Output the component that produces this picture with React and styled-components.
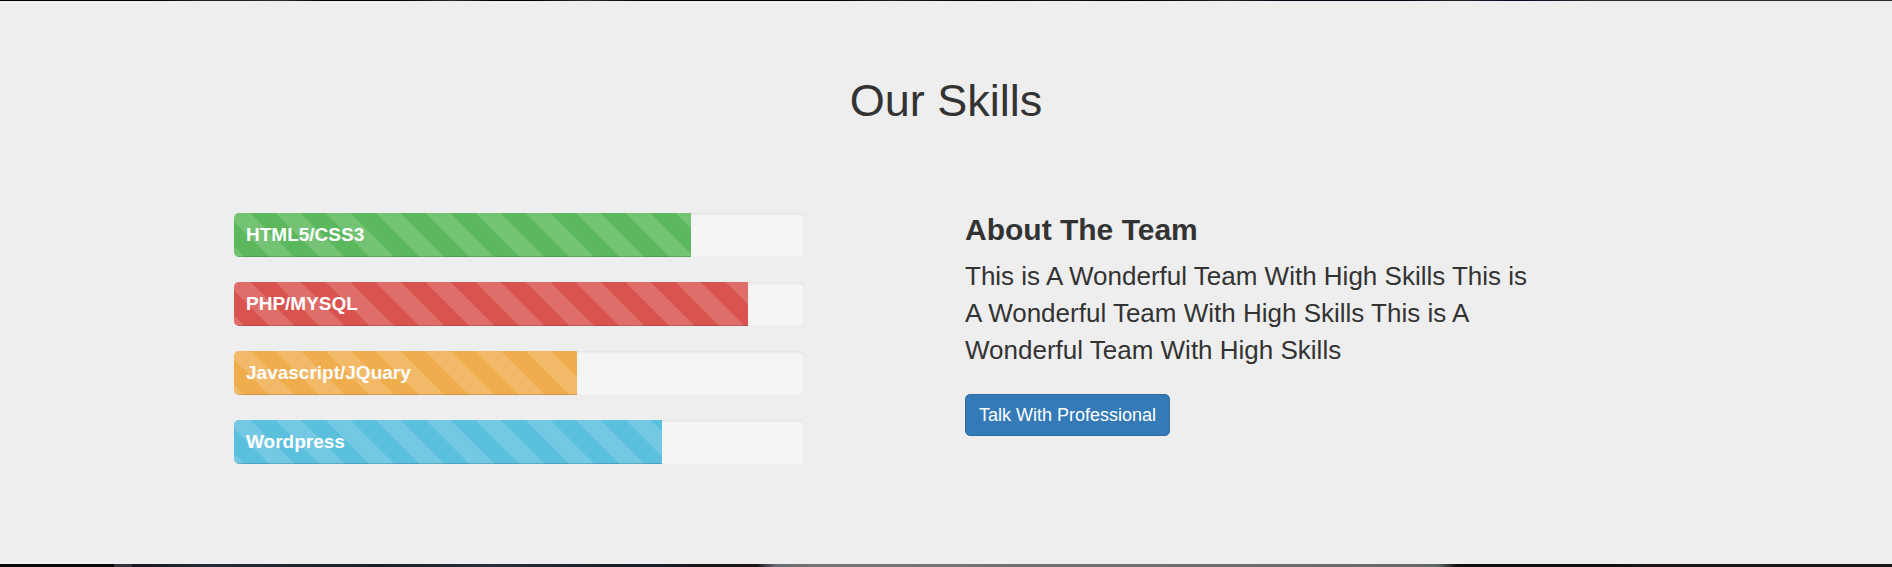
import React from "react";
import styled, { createGlobalStyle } from "styled-components";

const GlobalStyle = createGlobalStyle`
  *, *::before, *::after { box-sizing: border-box; }
  body {
    margin: 0;
    background: #eee;
    color: #333;
    font-family: "Liberation Sans", Arial, sans-serif;
  }
`;

const Page = styled.div`
  display: flex;
  flex-direction: column;
  min-height: 100vh;
`;

const TopEdge = styled.div`
  height: 1px;
  background: linear-gradient(90deg, #000 0%, #000 8%, #26222b 11%, #26222b 13%, #2b2830 15%, #000 17%, #000 21%, #2d2932 24%, #000 26%, #000 28%, #2d2932 31%, #000 34%, #000 44%, #201c1c 47%, #000 52%, #161014 56%, #000 60%, #23202c 65%, #030012 68%, #030012 74%, #252230 77%, #0a0520 80%, #2a2632 84%, #2a2632 100%);
`;

const BottomEdge = styled.div`
  height: 4px;
  background: linear-gradient(90deg, #08070a 0%, #08070a 6%, #303338 6%, #303338 7%, #14171b 7%, #252b38 11%, #1a1f28 20%, #2a2e3c 26%, #18202a 32%, #15202a 35%, #18141a 37%, #1c161c 40%, #666c72 41%, #727472 43%, #757270 50%, #6f6e6c 65%, #666965 75%, #5c6664 76%, #101014 77%, #0e0d10 85%, #1c1716 87%, #1a1718 100%);
`;

const Section = styled.section`
  flex: 1;
  padding: 72px 0 100px;
`;

const Container = styled.div`
  max-width: 1462px;
  margin: 0 auto;
`;

const Heading = styled.h1`
  margin: 0 0 84px;
  font-size: 45px;
  font-weight: 400;
  line-height: 56px;
  text-align: center;
`;

const Row = styled.div`
  display: grid;
  grid-template-columns: repeat(12, minmax(0, 1fr));
`;

const Column = styled.div`
  grid-column: ${(p) => p.$start} / span 5;
  padding: 0 19px;

  @media (max-width: 900px) {
    grid-column: 1 / -1;
    padding-bottom: 32px;
  }
`;

const SkillList = styled.div`
  display: flex;
  flex-direction: column;
  gap: 25px;
`;

const Track = styled.div`
  height: 44px;
  overflow: hidden;
  border-radius: 5px;
  background: #f5f5f5;
  box-shadow: inset 0 1px 3px rgba(0, 0, 0, 0.1);
`;

const Fill = styled.div`
  width: ${(p) => p.$value}%;
  height: 100%;
  padding-left: 12px;
  color: #fff;
  font-size: 19px;
  font-weight: 700;
  line-height: 44px;
  white-space: nowrap;
  background-color: ${(p) => p.$color};
  background-image: linear-gradient(
    45deg,
    rgba(255, 255, 255, 0.15) 25%,
    transparent 25%,
    transparent 50%,
    rgba(255, 255, 255, 0.15) 50%,
    rgba(255, 255, 255, 0.15) 75%,
    transparent 75%,
    transparent
  );
  background-size: 50px 50px;
  background-position: 42px 0;
  box-shadow: inset 0 -1px 0 rgba(0, 0, 0, 0.15);
`;

const TeamTitle = styled.h3`
  margin: 0 0 12px;
  font-size: 30px;
  line-height: 33px;
`;

const Lead = styled.p`
  margin: 0 0 25px;
  font-size: 26px;
  line-height: 37px;
`;

const Button = styled.button`
  height: 42px;
  padding: 0 13px;
  border: 1px solid #2e6da4;
  border-radius: 5px;
  background: #337ab7;
  color: #fff;
  font-family: inherit;
  font-size: 18px;
  line-height: 25px;
  white-space: nowrap;
  cursor: pointer;
`;

const skills = [
  { name: "HTML5/CSS3", value: 80, color: "#5cb85c" },
  { name: "PHP/MYSQL", value: 90, color: "#d9534f" },
  { name: "Javascript/JQuary", value: 60, color: "#f0ad4e" },
  { name: "Wordpress", value: 75, color: "#5bc0de" },
];

export default function App() {
  return (
    <Page>
      <GlobalStyle />
      <TopEdge />
      <Section>
        <Container>
          <Heading>Our Skills</Heading>
          <Row>
            <Column $start={1}>
              <SkillList>
                {skills.map((s) => (
                  <Track
                    key={s.name}
                    role="progressbar"
                    aria-label={s.name}
                    aria-valuenow={s.value}
                    aria-valuemin={0}
                    aria-valuemax={100}
                  >
                    <Fill $value={s.value} $color={s.color}>{s.name}</Fill>
                  </Track>
                ))}
              </SkillList>
            </Column>
            <Column $start={7}>
              <TeamTitle>About The Team</TeamTitle>
              <Lead>
                This is A Wonderful Team With High Skills This is A Wonderful
                Team With High Skills This is A Wonderful Team With High Skills
              </Lead>
              <Button type="button">Talk With Professional</Button>
            </Column>
          </Row>
        </Container>
      </Section>
      <BottomEdge />
    </Page>
  );
}
